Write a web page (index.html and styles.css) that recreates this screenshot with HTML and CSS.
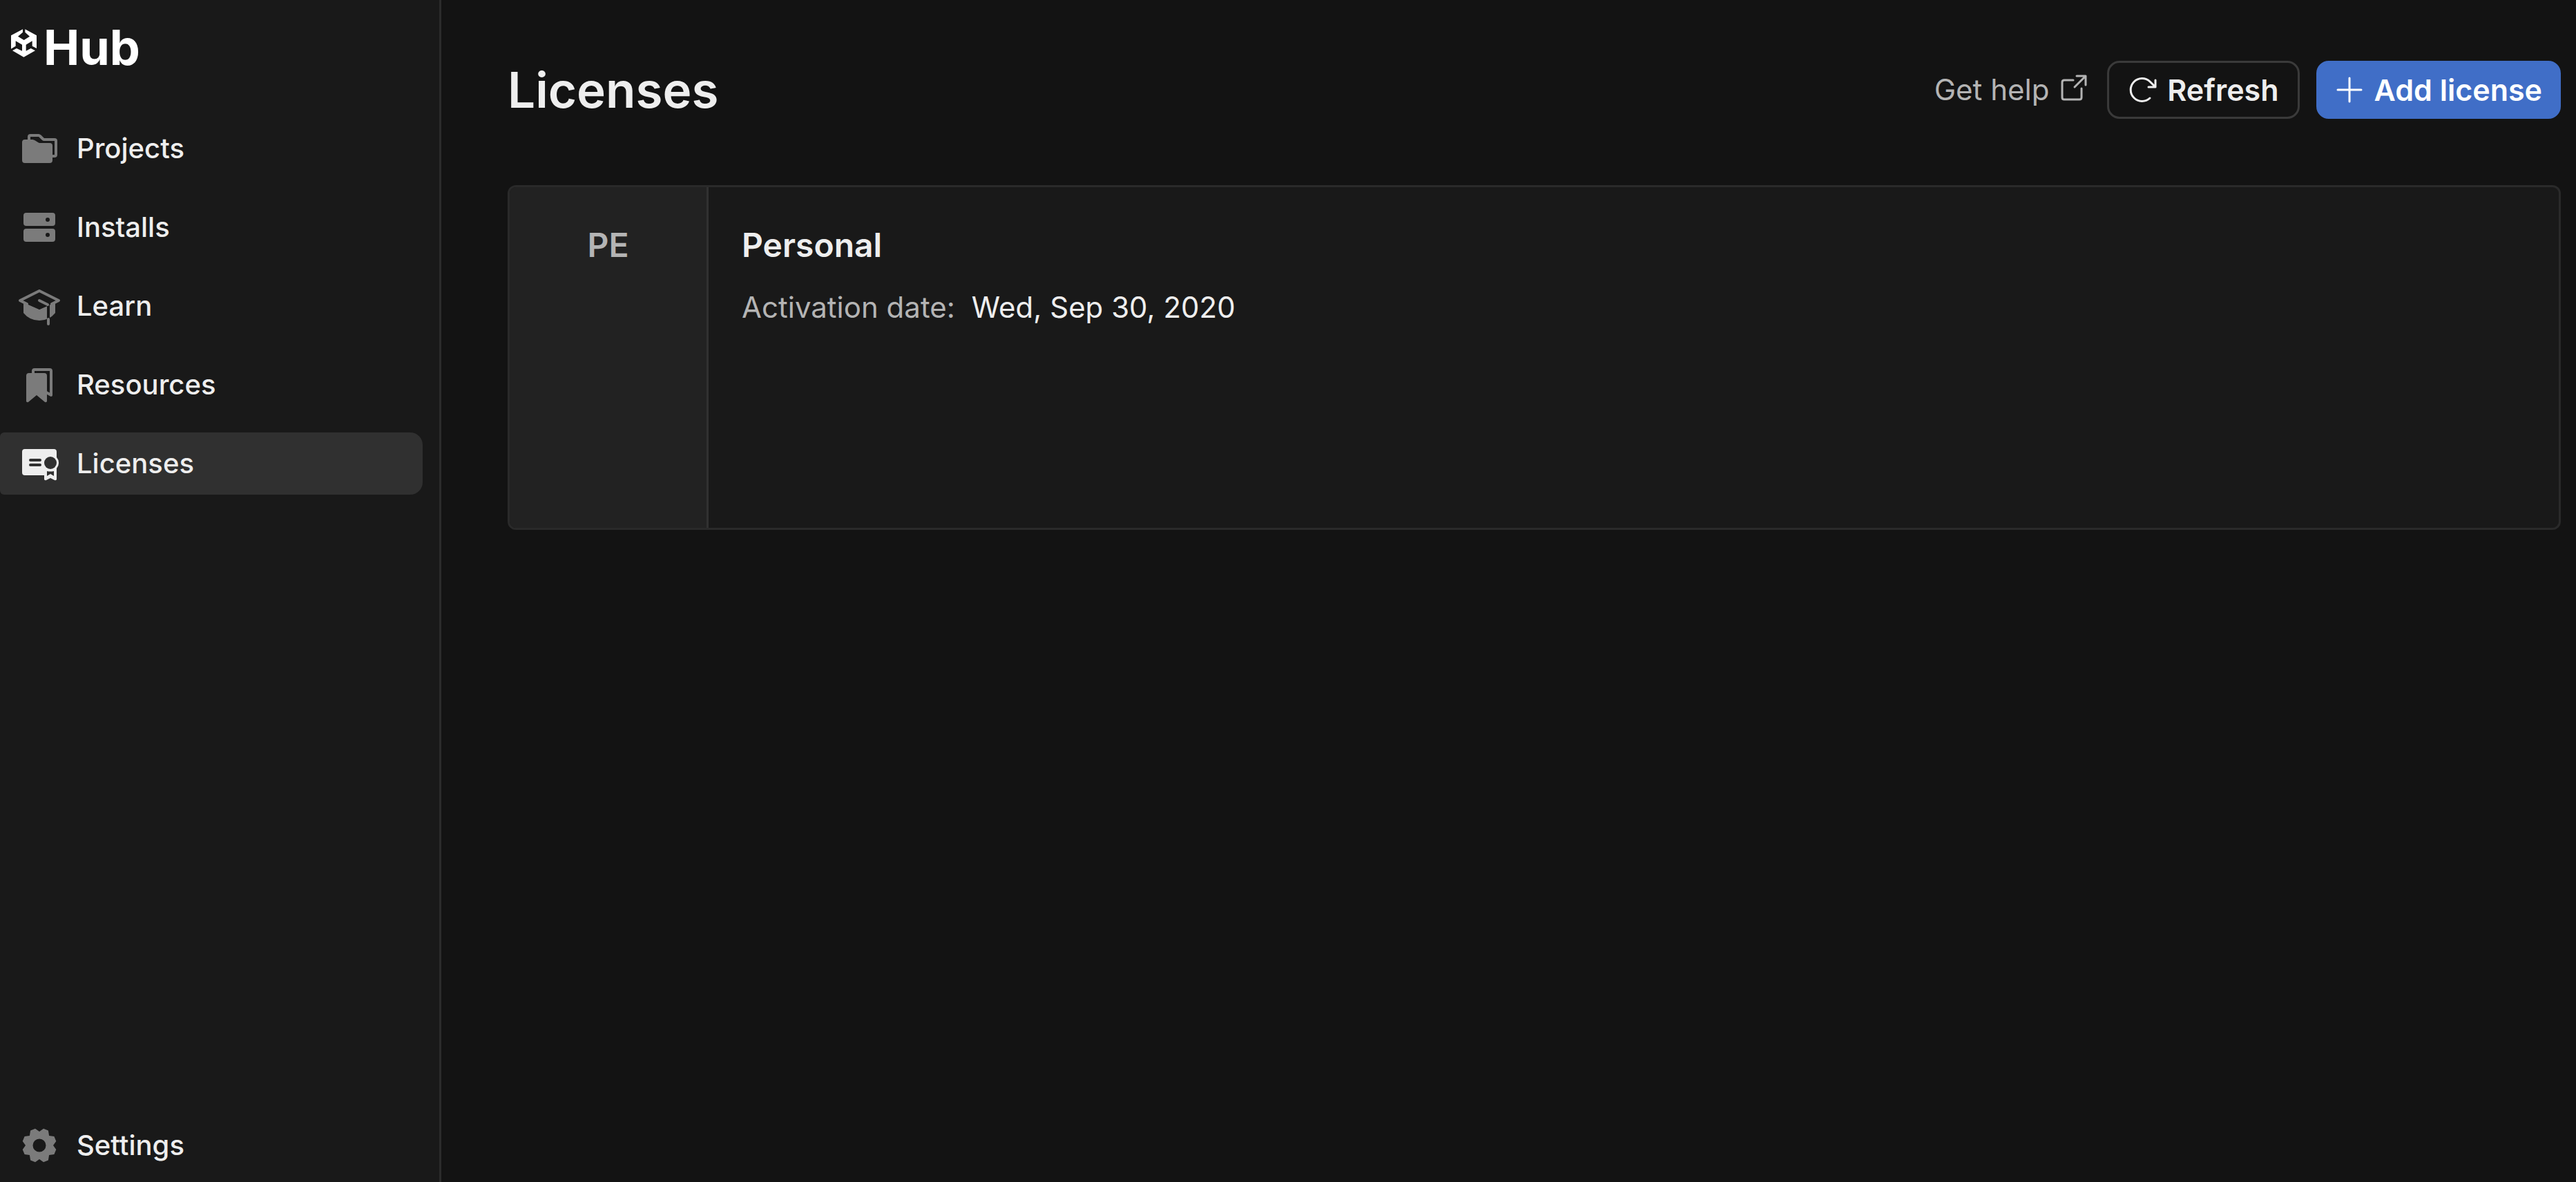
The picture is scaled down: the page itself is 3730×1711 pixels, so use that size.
FILE: index.html
```html
<!DOCTYPE html>
<html lang="en">
<head>
<meta charset="utf-8">
<title>Unity Hub - Licenses</title>
<link rel="stylesheet" href="styles.css">
</head>
<body>
<div class="app">
  <aside class="sidebar">
    <div class="brand">
      <svg class="brand-mark" viewBox="48 67 111 121" aria-hidden="true">
        <path fill="currentColor" d="M99 67V80L78 98L104 114L129 98L109 80V67L159 94V150L140 140V118L113 134V161L134 150L153 160L103 188L54 160L72 150L96 161V134L68 118V140L48 152V94Z"/>
      </svg>
      <span class="brand-name">Hub</span>
    </div>
    <nav class="nav">
      <a class="nav-item" href="#projects">
        <svg class="nav-icon" viewBox="0 0 72 72" aria-hidden="true">
          <path fill="none" stroke="currentColor" stroke-width="4" d="M21 24V19Q21 17 23 17H35Q36 17 37 18L41 22Q42 23 43 23H58Q60 23 60 25V45Q60 47 58 47H54"/>
          <path fill="currentColor" d="M15 23H26Q28 23 30 24.500L34 27Q35 28 37 28H51Q55 28 55 32V53Q55 57 51 57H15Q11 57 11 53V27Q11 23 15 23Z"/>
        </svg>
        <span>Projects</span>
      </a>
      <a class="nav-item" href="#installs">
        <svg class="nav-icon" viewBox="0 0 72 72" aria-hidden="true">
          <path fill="currentColor" fill-rule="evenodd" d="M17 15H55Q59 15 59 19V30Q59 34 55 34H17Q13 34 13 30V19Q13 15 17 15ZM48 22A3 3 0 1 0 48 28A3 3 0 1 0 48 22ZM17 38H55Q59 38 59 42V53Q59 57 55 57H17Q13 57 13 53V42Q13 38 17 38ZM48 44A3 3 0 1 0 48 50A3 3 0 1 0 48 44Z"/>
        </svg>
        <span>Installs</span>
      </a>
      <a class="nav-item" href="#learn">
        <svg class="nav-icon" viewBox="0 0 72 72" aria-hidden="true">
          <path fill="currentColor" d="M13 31L36 41L59 31V46Q50 57 36 57Q22 57 13 46Z"/>
          <path class="cap-top" d="M36 14L64 28L36 41L8 28Z"/>
          <path class="cutout" d="M49 35V56"/>
          <path fill="none" stroke="currentColor" stroke-width="4" stroke-linejoin="round" stroke-linecap="round" d="M48 34L36 28M49 55V62M54 33L64 28L36 14L8 28L18 33"/>
        </svg>
        <span>Learn</span>
      </a>
      <a class="nav-item" href="#resources">
        <svg class="nav-icon" viewBox="0 0 72 72" aria-hidden="true">
          <path fill="none" stroke="currentColor" stroke-width="4" stroke-linejoin="round" d="M27 20V16Q27 14 29 14H51Q53 14 53 16V51L46 47"/>
          <path fill="currentColor" d="M21 19H43Q47 19 47 23V60Q46 62 44 61L32 51L20 61Q18 62 17 60V23Q17 19 21 19Z"/>
        </svg>
        <span>Resources</span>
      </a>
      <a class="nav-item nav-item-active" href="#licenses" aria-current="page">
        <svg class="nav-icon" viewBox="0 0 72 72" aria-hidden="true">
          <path fill="currentColor" d="M15 15H57Q61 15 61 19V27A12 12 0 0 1 61 43V59Q60 61 58 60L52 57L46 60Q44 61 43 59V53H15Q11 53 11 49V19Q11 15 15 15Z"/>
          <circle class="cutout-fill" cx="52" cy="35" r="9"/>
          <path class="cutout-fill" d="M47 47Q52 48 57 47V54L52 51L47 54Z"/>
          <path class="cutout-line" d="M23 31H37M23 38H37"/>
        </svg>
        <span>Licenses</span>
      </a>
    </nav>
    <a class="nav-item nav-settings" href="#settings">
      <svg class="nav-icon" viewBox="0 0 72 72" aria-hidden="true">
        <path fill="currentColor" fill-rule="evenodd" d="M36 16L42 11.700L48.900 14.600L50.100 21.900L57.400 23.100L60.300 30L56 36L60.300 42L57.400 48.900L50.100 50.100L48.900 57.400L42 60.300L36 56L30 60.300L23.100 57.400L21.900 50.100L14.600 48.900L11.700 42L16 36L11.700 30L14.600 23.100L21.900 21.900L23.100 14.600L30 11.700ZM36 26.500A9.500 9.500 0 1 0 36 45.500A9.500 9.500 0 1 0 36 26.500Z"/>
      </svg>
      <span>Settings</span>
    </a>
  </aside>
  <main class="main">
    <header class="header">
      <h1 class="title">Licenses</h1>
      <div class="actions">
        <a class="help" href="#help">
          <span>Get help</span>
          <svg class="icon" viewBox="0 0 36 36" aria-hidden="true">
            <path class="stroke" d="M17 7H4Q1 7 1 10V32Q1 35 4 35H26Q29 35 29 32V19M19 17L35 1M22 1H35V14"/>
          </svg>
        </a>
        <button class="button" type="button">
          <svg class="icon" viewBox="0 0 36 36" aria-hidden="true">
            <path class="stroke" d="M29 30A16.500 16.500 0 1 1 29 6L37 14M37 4V14H27"/>
          </svg>
          <span>Refresh</span>
        </button>
        <button class="button button-primary" type="button">
          <svg class="icon" viewBox="0 0 36 36" aria-hidden="true">
            <path class="stroke" d="M18 1V35M1 18H35"/>
          </svg>
          <span>Add license</span>
        </button>
      </div>
    </header>
    <article class="card">
      <div class="card-badge">PE</div>
      <div class="card-body">
        <h2 class="card-title">Personal</h2>
        <dl class="detail">
          <dt class="detail-label">Activation date:</dt>
          <dd class="detail-value">Wed, Sep 30, 2020</dd>
        </dl>
      </div>
    </article>
  </main>
</div>
</body>
</html>
```
FILE: styles.css
```css
* {
  box-sizing: border-box;
}

body {
  margin: 0;
  background: #131313;
  color: #eeeeee;
  font-family: Inter, "Liberation Sans", sans-serif;
  font-size: 42px;
  line-height: 60px;
}

.app {
  display: flex;
  min-height: 100vh;
}

.sidebar {
  display: flex;
  flex-direction: column;
  flex: none;
  width: 639px;
  padding: 24px 24px 8px 0;
  border-right: 3px solid #2b2b2b;
  background: #191919;
}

.brand {
  display: flex;
  align-items: flex-start;
  gap: 10px;
  height: 96px;
  padding-left: 16px;
  color: #ffffff;
}

.brand-mark {
  width: 37px;
  height: 41px;
  margin-top: 18px;
}

.brand-name {
  font-size: 70px;
  font-weight: 700;
  line-height: 90px;
}

.nav {
  display: flex;
  flex-direction: column;
  gap: 24px;
  margin-top: 50px;
}

.nav-item {
  display: flex;
  align-items: center;
  gap: 18px;
  height: 90px;
  padding-left: 21px;
  border-radius: 6px 18px 18px 6px;
  color: #eeeeee;
  font-size: 40px;
  font-weight: 500;
  text-decoration: none;
}

.nav-item-active {
  background: #303030;
}

.nav-settings {
  margin-top: auto;
}

.nav-icon {
  flex: none;
  width: 72px;
  height: 72px;
  color: #7b7b7b;
}

.nav-item-active .nav-icon {
  color: #eeeeee;
}

.cap-top {
  fill: #191919;
}

.cutout {
  fill: none;
  stroke: #191919;
  stroke-width: 4px;
}

.cutout-fill {
  fill: #303030;
}

.cutout-line {
  stroke: #303030;
  stroke-width: 4px;
  stroke-linecap: round;
}

.main {
  flex: 1;
  min-width: 0;
  padding: 80px 22px 24px 96px;
}

.header {
  display: flex;
  align-items: center;
  justify-content: space-between;
  height: 100px;
}

.title {
  margin: 0;
  font-size: 71px;
  font-weight: 600;
  line-height: 90px;
}

.actions {
  display: flex;
  align-items: center;
  gap: 24px;
}

.help {
  display: flex;
  align-items: center;
  gap: 18px;
  margin-right: 6px;
  color: #b4b4b4;
  text-decoration: none;
}

.help .icon {
  margin-bottom: 6px;
}

.button {
  display: flex;
  align-items: center;
  gap: 18px;
  height: 84px;
  padding: 0 27px 0 30px;
  border: 3px solid #3a3a3a;
  border-radius: 18px;
  background: transparent;
  color: #eeeeee;
  font: inherit;
  font-size: 43px;
  font-weight: 600;
}

.button-primary {
  padding: 0 24px 0 27px;
  border-color: #406ec7;
  background: #406ec7;
  color: #ffffff;
}

.icon {
  flex: none;
  width: 36px;
  height: 36px;
  overflow: visible;
}

.stroke {
  fill: none;
  stroke: currentColor;
  stroke-width: 3px;
  stroke-linecap: round;
  stroke-linejoin: round;
}

.card {
  display: flex;
  min-height: 499px;
  margin-top: 88px;
  overflow: hidden;
  border: 3px solid #2a2a2a;
  border-radius: 12px;
  background: #191919;
}

.card-badge {
  flex: none;
  width: 288px;
  padding-top: 54px;
  border-right: 3px solid #313131;
  background: #222222;
  color: #b4b4b4;
  font-size: 48px;
  font-weight: 600;
  text-align: center;
}

.card-body {
  flex: 1;
  padding: 54px 48px;
}

.card-title {
  margin: 0;
  font-size: 48px;
  font-weight: 600;
}

.detail {
  display: flex;
  gap: 24px;
  margin: 30px 0 0;
}

.detail-label {
  color: #b4b4b4;
}

.detail-value {
  margin: 0;
}
```
